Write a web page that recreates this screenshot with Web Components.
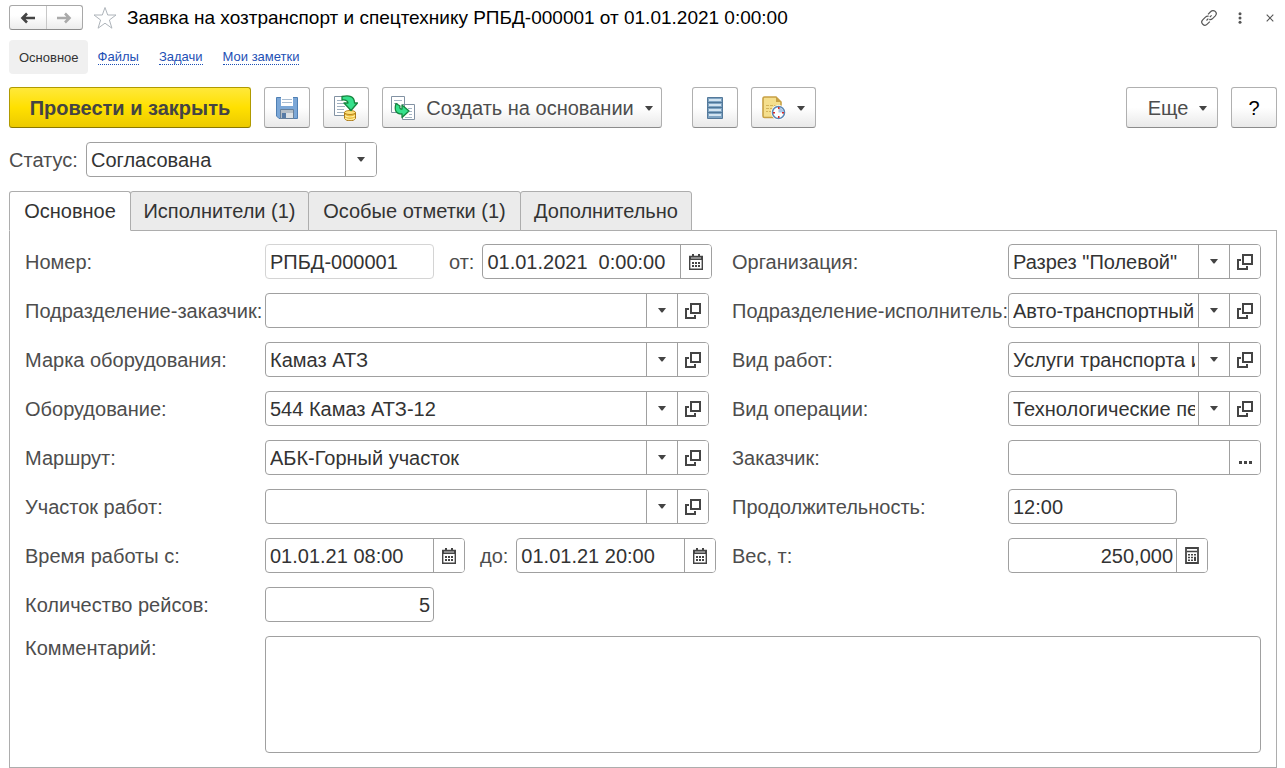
<!DOCTYPE html>
<html lang="ru">
<head>
<meta charset="utf-8">
<title>Заявка на хозтранспорт и спецтехнику</title>
<style>
  body { margin: 0; background: #fff; font-family: "Liberation Sans", Arial, sans-serif; font-size: 20px; line-height: 24px; color: #4d4d4d; }
</style>
</head>
<body>
<request-page></request-page>

<script>
const ICONS = {
  back: '<svg width="16" height="12" viewBox="0 0 16 12"><path d="M7 1.5 2.5 6 7 10.5M3 6h12" fill="none" stroke="#444" stroke-width="2.6"/></svg>',
  forward: '<svg width="16" height="12" viewBox="0 0 16 12"><path d="M9 1.5 13.5 6 9 10.5M13 6H1" fill="none" stroke="#aaa" stroke-width="2.6"/></svg>',
  star: '<svg width="24" height="24" viewBox="0 0 24 24"><path d="M12 1.5l2.7 7.5h8.300l-6.600 5 2.500 8.200L12 17.200l-6.900 5L7.600 14 1 9h8.300z" fill="#fff" stroke="#aeb4ba" stroke-width="1"/></svg>',
  link: '<svg width="18" height="18" viewBox="0 0 18 18"><g fill="none" stroke="#555" stroke-width="1.200"><path d="M8 5.300l2.800-2.800a3 3 0 0 1 4.500 4.300l-3 3a3 3 0 0 1-3 .6"/><path d="M9.800 12.600L7.200 15.200a3 3 0 0 1-4.500-4.300l3-3a3 3 0 0 1 3-.6"/><path d="M6.500 11.500l1.800-1.800M9.800 8.200l1.800-1.800"/></g></svg>',
  dots: '<svg width="4" height="12" viewBox="0 0 4 12"><g fill="#555"><circle cx="2" cy="1.700" r="1.500"/><circle cx="2" cy="6" r="1.500"/><circle cx="2" cy="10.300" r="1.500"/></g></svg>',
  close: '<svg width="8" height="8" viewBox="0 0 8 8"><path d="M.7.7l6.600 6.600M7.300.7L.7 7.300" stroke="#555" stroke-width="1.100"/></svg>',
  save: '<svg width="24" height="24" viewBox="0 0 24 24"><path d="M1.500 1.500h21v21H4l-2.500-2.500z" fill="#7ba7d7" stroke="#4f7fb3"/><path d="M6 1h12v9H6z" fill="#fff"/><path d="M7 3.500h10M7 6.500h10" stroke="#a9bdd2"/><path d="M5.500 13.500h13v9h-13z" fill="#b4bec7" stroke="#66809b"/><path d="M7 17h4v5H7z" fill="#567ba6"/><path d="M11 17h7v5h-7z" fill="#dce1e5"/></svg>',
  post: '<svg width="24" height="26" viewBox="0 0 24 26"><path d="M.5 1.500h15v19H.5z" fill="#fff" stroke="#8292a3"/><path d="M3 5.500h5M3 8.500h7M3 11.500h8M3 14.500h7M3 17.500h7" stroke="#9fb0c0"/><path d="M10.500 17.500h11v6c-1.500 3-9.500 3-11 0z" fill="#e9b93b" stroke="#a97816"/><ellipse cx="16" cy="17.500" rx="5.500" ry="2" fill="#ffe27a" stroke="#b88620"/><path d="M11 20.500c2 2 8 2 10 0M11 23c2 2 8 2 10 0" fill="none" stroke="#fff0a2" stroke-width="1.200"/><path d="M8 1.500c7-1.500 12.500-.5 12.500 6.500h3L17 15.500 10 8h4c-.5-2.500-2.500-3.500-6-3z" fill="#35e08b" stroke="#16853e" stroke-width="1.300" stroke-linejoin="round"/></svg>',
  create: '<svg width="24" height="24" viewBox="0 0 24 24"><path d="M.5.5h13v16H.5zM11.500 8.500h12v15h-12z" fill="#fff" stroke="#8292a3"/><path d="M3 4.500h8M3 7.500h4M17 12.500h4M18 15.500h3M18 18.500h3M14 21.500h7" stroke="#a6b6c5"/><path d="M5 7.500c-2 7 0 10.500 6 10.500v3.500l7-6.500-7-6v4c-2 .5-2.500-1.500-2-3z" fill="#35e08b" stroke="#16853e" stroke-width="1.300" stroke-linejoin="round"/></svg>',
  list: '<svg width="16" height="22" viewBox="0 0 16 22"><path d="M.5.500h15v21H.5z" fill="#7fa4c3" stroke="#54799a"/><path d="M2 3h12M2 8h12M2 13h12M2 18h12" stroke="#d3e4f0" stroke-width="2"/><path d="M1 5.500h14M1 10.500h14M1 15.500h14" stroke="#4e7697"/></svg>',
  schedule: '<svg width="24" height="24" viewBox="0 0 24 24"><path d="M1 2.500Q1 1 2.500 1H14l5 5v15.500H2.500Q1 21.500 1 20z" fill="#f5df8d" stroke="#c7a044" stroke-width="1.600"/><path d="M14 1v5h5z" fill="#c7a044"/><path d="M4 9.500h3m1 0h3m1 0h3M4 12.500h3m1 0h3M4 15.500h2m1 0h2" stroke="#d3b359"/><circle cx="16.500" cy="16.500" r="7.500" fill="#fff"/><circle cx="16.500" cy="16.500" r="6" fill="#fff" stroke="#5b87b5" stroke-width="1.600"/><path d="M16.500 16.500v-5a5 5 0 0 1 5 5z" fill="#a9c5e5"/><g fill="#d52a2a"><path d="M16 11h1.500v2H16zM16 20h1.500v2H16zM11 16h2v1.500h-2zM20 16h2v1.500h-2z"/></g></svg>',
  drop: '<svg class="drop" width="8" height="5" viewBox="0 0 8 5"><path d="M0 0h8L4.500 4.500h-1z" fill="#444"/></svg>',
  open: '<svg width="16" height="16" viewBox="0 0 16 16"><path d="M6 1h9v9H6z" fill="none" stroke="#444" stroke-width="2"/><path d="M4 6H1v9h9v-3" fill="none" stroke="#444" stroke-width="2"/></svg>',
  calendar: '<svg width="14" height="16" viewBox="0 0 14 16"><path d="M.7 2.500h12.600v12.800H.7z" fill="#fff" stroke="#444" stroke-width="1.400"/><path d="M1 2h12v4H1zM3 0h2v3H3zM9 0h2v3H9z" fill="#444"/><path d="M2 4h10" stroke="#fff" stroke-width=".8"/><path d="M3 8h2v2H3zm3 0h2v2H6zm3 0h2v2H9zM3 11h2v2H3zm3 0h2v2H6zm3 0h2v2H9z" fill="#444"/></svg>',
  calc: '<svg width="14" height="17" viewBox="0 0 14 17"><path d="M1 1h12v15H1z" fill="#fff" stroke="#444" stroke-width="1.800"/><path d="M2 4.500h10" stroke="#444" stroke-width="1.500"/><path d="M3 7h2v1.500H3zm3 0h2v1.500H6zm3 0h2v1.500H9zM3 9.700h2v1.500H3zm3 0h2v1.500H6zM3 12.500h2V14H3zm3 0h2V14H6zm3-2.800h2V14H9z" fill="#444"/></svg>',
  more: '<svg width="13" height="3" viewBox="0 0 13 3"><path d="M0 0h3v3H0zm5 0h3v3H5zm5 0h3v3h-3z" fill="#444"/></svg>'
};

const RESET = `
  *, *::before { box-sizing: border-box; }
  svg { display: block; flex: none; }
  button, input, select, textarea { font: inherit; color: inherit; margin: 0; }
`;

function define(name, render) {
  customElements.define(name, class extends HTMLElement {
    connectedCallback() {
      if (this.shadowRoot) return;
      this.attachShadow({ mode: 'open' }).innerHTML = `<style>${RESET}</style>` + render(this);
    }
  });
}

define('window-header', () => `
  <style>
    :host { display: flex; align-items: center; height: 25px; }
    .history { display: flex; width: 74px; height: 25px; border: 1px solid #a8a8a8; border-bottom-color: #8c8c8c; border-radius: 3px; background: linear-gradient(#fff 40%, #ececec); }
    button { display: grid; place-items: center; padding: 0; border: 0; background: none; }
    .history button { flex: 1; }
    .history button + button { border-left: 1px solid #c8c8c8; }
    .star { margin: 0 10px; }
    h1 { flex: 1; margin: 0; font-size: 19px; line-height: 24px; font-weight: 400; color: #000; white-space: nowrap; }
    .tools { display: flex; align-items: center; gap: 20px; padding-right: 3px; }
    .close { margin-left: 4px; }
  </style>
  <div class="history">
    <button aria-label="Назад">${ICONS.back}</button>
    <button aria-label="Вперед" disabled>${ICONS.forward}</button>
  </div>
  <button class="star" aria-label="В избранное">${ICONS.star}</button>
  <h1><slot></slot></h1>
  <div class="tools">
    <button aria-label="Получить ссылку">${ICONS.link}</button>
    <button aria-label="Меню">${ICONS.dots}</button>
    <button class="close" aria-label="Закрыть">${ICONS.close}</button>
  </div>`);

define('section-nav', () => `
  <style>
    :host { display: block; margin-top: 10px; font-size: 13px; line-height: 16px; }
    nav { display: flex; align-items: center; gap: 20px; height: 34px; }
    .current { height: 34px; line-height: 36px; padding: 0 9px 0 10px; margin-right: -10px; border-radius: 4px; background: #f0f0f0; color: #333; }
    a { color: #1d50b5; text-decoration: none; border-bottom: 1px dotted #1d50b5; line-height: 14px; }
  </style>
  <nav><span class="current">Основное</span><a href="#files">Файлы</a><a href="#tasks">Задачи</a><a href="#notes">Мои заметки</a></nav>`);

define('tool-button', el => {
  const icon = el.getAttribute('icon');
  const menu = el.hasAttribute('menu');
  const label = el.getAttribute('hint');
  return `
  <style>
    :host { display: block; flex: none; width: var(--width, 46px); }
    button { display: flex; align-items: center; justify-content: center; gap: 11px; width: 100%; height: 41px; padding: 0; border: 1px solid #b0b0b0; border-bottom-color: #8c8c8c; border-radius: 3px; background: linear-gradient(#fff 50%, #e9e9e9); color: #4d4d4d; white-space: nowrap; }
    :host([primary]) button { background: linear-gradient(#ffe83a, #ffe000 50%, #ecca00); border-color: #b09a00; border-bottom-color: #8a7800; font-weight: 700; color: #444; }
    :host([plain]) button { padding-left: 11px; }
    :host([help]) button { color: #000; }
    .drop { margin-top: 2px; }
  </style>
  <button${label ? ` aria-label="${label}"` : ''}>${icon ? ICONS[icon] : ''}<slot></slot>${menu ? ICONS.drop : ''}</button>`;
});

define('command-bar', () => `
  <style>
    :host { display: flex; gap: 13px; margin-top: 13px; }
    .group { display: flex; gap: 13px; }
    .view { margin-left: 17px; }
    .end { margin-left: auto; }
    .submit { --width: 242px; }
    .create { --width: 280px; }
    .schedule { --width: 65px; }
    .more { --width: 92px; }
  </style>
  <div class="group">
    <tool-button class="submit" primary>Провести и закрыть</tool-button>
    <tool-button icon="save" hint="Записать"></tool-button>
    <tool-button icon="post" hint="Провести"></tool-button>
    <tool-button class="create" icon="create" menu>Создать на основании</tool-button>
  </div>
  <div class="group view">
    <tool-button icon="list" hint="Список"></tool-button>
    <tool-button class="schedule" icon="schedule" menu hint="Напоминание"></tool-button>
  </div>
  <div class="group end">
    <tool-button class="more" menu plain>Еще</tool-button>
    <tool-button help>?</tool-button>
  </div>`);

const HINTS = { drop: 'Выбрать из списка', open: 'Открыть', calendar: 'Календарь', calc: 'Калькулятор', more: 'Выбрать' };

define('form-field', el => {
  const get = n => (el.getAttribute(n) || '').replace(/"/g, '&quot;');
  const kind = el.getAttribute('kind');
  const buttons = get('buttons').split(' ').filter(Boolean);
  let control = `<input id="control" type="text" value="${get('value')}"${el.hasAttribute('locked') ? ' readonly' : ''}>`;
  if (kind === 'area') control = '<textarea id="control"></textarea>';
  if (kind === 'select') control = `<select id="control"><option>${get('value')}</option></select><span class="arrow">${ICONS.drop}</span>`;
  return `
  <style>
    :host { display: flex; align-items: center; min-width: 0; }
    :host([fixed]) { flex: none; }
    label { flex: none; width: var(--label, auto); white-space: nowrap; color: #4d4d4d; }
    .box { display: flex; flex: 1 1 auto; min-width: 0; width: var(--box, auto); height: 35px; border: 1px solid #a0a0a0; border-radius: 4px; background: #fff; overflow: hidden; color: #333; }
    :host([fixed]) .box { flex: none; }
    :host([inline]) { gap: 8px; }
    :host([locked]) .box { border-color: #d4d4d4; }
    :host([number]) input { text-align: right; }
    input, select, textarea { flex: 1; min-width: 0; width: 0; height: 100%; padding: 1px 3px 0 4px; border: 0; outline: 0; background: none; border-radius: 0; }
    select { appearance: none; padding-top: 0; }
    textarea { resize: none; }
    button, .arrow { display: grid; place-items: center; flex: none; width: 31px; padding: 0; border: 0; border-left: 1px solid #a0a0a0; background: #fff; }
    .more { padding-top: 9px; }
    :host([kind="area"]) { align-items: flex-start; }
    :host([kind="area"]) .box { height: 117px; }
  </style>
  <label for="control">${get('label')}</label>
  <div class="box">${control}${buttons.map(b => `<button class="${b}" aria-label="${HINTS[b]}">${ICONS[b]}</button>`).join('')}</div>`;
});

define('tab-strip', () => `
  <style>
    :host { display: block; margin-top: 14px; }
    [role=tablist] { display: flex; }
    button { width: 122px; height: 40px; padding: 0; border: 1px solid #adadad; border-radius: 3px 3px 0 0; background: #ebebeb; color: #333; white-space: nowrap; }
    button + button { margin-left: -1px; }
    .performers { width: 179px; }
    .remarks { width: 213px; }
    .extra { width: 172px; }
    [aria-selected=true] { position: relative; background: #fff; border-bottom-color: #fff; }
    section { margin-top: -1px; border: 1px solid #adadad; padding: 13px 15px 14px; }
  </style>
  <div role="tablist">
    <button role="tab" aria-selected="true">Основное</button>
    <button class="performers" role="tab" aria-selected="false">Исполнители (1)</button>
    <button class="remarks" role="tab" aria-selected="false">Особые отметки (1)</button>
    <button class="extra" role="tab" aria-selected="false">Дополнительно</button>
  </div>
  <section role="tabpanel"><slot></slot></section>`);

define('request-form', () => `
  <style>
    :host { display: grid; grid-template-columns: minmax(0, 1fr) 529px; gap: 14px 23px; }
    .column { display: flex; flex-direction: column; gap: 14px; min-width: 0; }
    .main { --label: 240px; }
    .side { --label: 276px; }
    .pair { display: flex; gap: 15px; }
    .short { --box: 169px; }
    .stamp { --box: 230px; }
    .time { --box: 200px; }
    [inline] { --label: auto; }
    .wide { grid-column: 1 / -1; --label: 240px; }
  </style>
  <div class="column main">
    <div class="pair">
      <form-field class="short" fixed locked label="Номер:" value="РПБД-000001"></form-field>
      <form-field class="stamp" fixed inline label="от:" value="01.01.2021  0:00:00" buttons="calendar"></form-field>
    </div>
    <form-field label="Подразделение-заказчик:" buttons="drop open"></form-field>
    <form-field label="Марка оборудования:" value="Камаз АТЗ" buttons="drop open"></form-field>
    <form-field label="Оборудование:" value="544 Камаз АТЗ-12" buttons="drop open"></form-field>
    <form-field label="Маршрут:" value="АБК-Горный участок" buttons="drop open"></form-field>
    <form-field label="Участок работ:" buttons="drop open"></form-field>
    <div class="pair">
      <form-field class="time" fixed label="Время работы с:" value="01.01.21 08:00" buttons="calendar"></form-field>
      <form-field class="time" fixed inline label="до:" value="01.01.21 20:00" buttons="calendar"></form-field>
    </div>
    <form-field class="short" fixed number label="Количество рейсов:" value="5"></form-field>
  </div>
  <div class="column side">
    <form-field label="Организация:" value='Разрез "Полевой"' buttons="drop open"></form-field>
    <form-field label="Подразделение-исполнитель:" value="Авто-транспортный" buttons="drop open"></form-field>
    <form-field label="Вид работ:" value="Услуги транспорта и" buttons="drop open"></form-field>
    <form-field label="Вид операции:" value="Технологические пер" buttons="drop open"></form-field>
    <form-field label="Заказчик:" buttons="more"></form-field>
    <form-field class="short" fixed label="Продолжительность:" value="12:00"></form-field>
    <form-field class="time" fixed number label="Вес, т:" value="250,000" buttons="calc"></form-field>
  </div>
  <form-field class="wide" kind="area" label="Комментарий:"></form-field>`);

define('request-page', () => `
  <style>
    :host { display: block; padding: 5px 8px 0 9px; }
    .status { --label: 77px; --box: 291px; margin-top: 14px; }
  </style>
  <window-header>Заявка на хозтранспорт и спецтехнику РПБД-000001 от 01.01.2021 0:00:00</window-header>
  <section-nav></section-nav>
  <command-bar></command-bar>
  <form-field class="status" kind="select" fixed label="Статус:" value="Согласована"></form-field>
  <tab-strip><request-form></request-form></tab-strip>`);
</script>
</body>
</html>
